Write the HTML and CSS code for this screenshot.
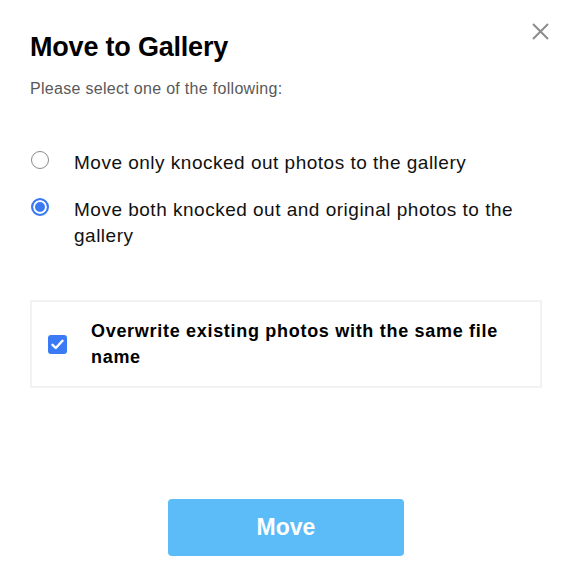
FILE: index.html
```html
<!DOCTYPE html>
<html lang="en">
  <head>
    <meta charset="UTF-8" />
    <meta name="viewport" content="width=device-width, initial-scale=1.0" />
    <title>Move to Gallery</title>
    <link rel="stylesheet" href="styles.css">
  </head>
  <body>
    <div class="dialog">
      <button type="button" class="close-btn" aria-label="Close">
        <svg width="17" height="17" viewBox="0 0 17 17">
          <path d="M1 1 L16 16 M16 1 L1 16" stroke="#8c8c8c" stroke-width="2" fill="none" />
        </svg>
      </button>
      <h2 class="title">Move to Gallery</h2>
      <p class="subtitle">Please select one of the following:</p>
      <div class="options">
        <label class="option option-first">
          <input type="radio" name="move" />
          <span>Move only knocked out photos to the gallery</span>
        </label>
        <label class="option">
          <input type="radio" name="move" checked />
          <span>Move both knocked out and original photos to the gallery</span>
        </label>
      </div>
      <label class="overwrite">
        <span class="checkbox">
          <svg width="13" height="11" viewBox="0 0 13 11">
            <path d="M1.5 5.8 L4.8 9 L11.5 1.8" stroke="#fff" stroke-width="2.4" fill="none" stroke-linecap="round" stroke-linejoin="round" />
          </svg>
        </span>
        <span class="overwrite-text">Overwrite existing photos with the same file name</span>
      </label>
      <div class="actions">
        <button type="button" class="move-btn">Move</button>
      </div>
    </div>
  </body>
</html>
```

FILE: styles.css
```css
body {
  margin: 0;
  font-family: "Liberation Sans", Arial, sans-serif;
  background-color: #fff;
  color: #000;
}
.dialog {
  position: relative;
  display: flex;
  flex-direction: column;
  padding: 31px 32px 0 30px;
}
.close-btn {
  position: absolute;
  top: 23px;
  right: 25px;
  padding: 0;
  border: none;
  background: none;
  width: 17px;
  height: 17px;
  cursor: pointer;
}
.close-btn svg {
  display: block;
}
.title {
  margin: 0;
  font-size: 27px;
  line-height: 32px;
  font-weight: bold;
  letter-spacing: -0.2px;
}
.subtitle {
  margin: 16px 0 0;
  font-size: 16px;
  line-height: 20px;
  letter-spacing: 0.3px;
  color: #595959;
}
.options {
  display: flex;
  flex-direction: column;
  gap: 21px;
  margin-top: 51px;
}
.option {
  display: flex;
  align-items: flex-start;
  gap: 25px;
  padding-left: 1px;
  font-size: 19px;
  line-height: 26px;
  letter-spacing: 0.5px;
  color: #111;
  cursor: pointer;
}
.option input {
  appearance: none;
  flex: none;
  width: 18px;
  height: 18px;
  margin: 1px 0 0;
  border: 1px solid #8a8a8a;
  border-radius: 50%;
  background: #fff;
}
.option input:checked {
  border: 2px solid #3a7bf5;
  background: #3a7bf5;
  box-shadow: inset 0 0 0 2px #fff;
}
.overwrite {
  display: flex;
  align-items: center;
  gap: 24px;
  margin-top: 51px;
  padding: 16px;
  border: 2px solid #f2f2f2;
  cursor: pointer;
}
.checkbox {
  flex: none;
  display: flex;
  align-items: center;
  justify-content: center;
  width: 19px;
  height: 19px;
  border-radius: 3px;
  background: #3a7bf5;
}
.overwrite-text {
  font-size: 18px;
  line-height: 26px;
  font-weight: bold;
  letter-spacing: 0.7px;
}
.actions {
  display: flex;
  justify-content: center;
  margin-top: 111px;
}
.move-btn {
  width: 236px;
  height: 57px;
  border: none;
  border-radius: 4px;
  background: #5bbcf7;
  color: #fff;
  font-family: "Liberation Sans", Arial, sans-serif;
  font-size: 23px;
  font-weight: bold;
  cursor: pointer;
}
```
